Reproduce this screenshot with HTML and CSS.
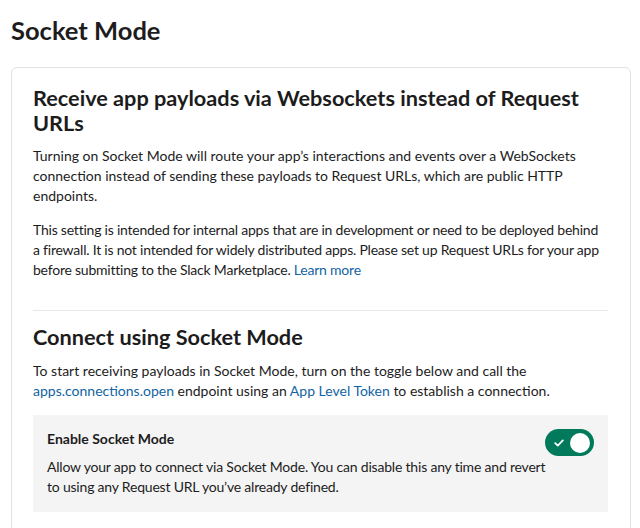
FILE: index.html
```html
<!DOCTYPE html>
<html lang="en">
<head>
<meta charset="utf-8">
<title>Socket Mode</title>
<link rel="stylesheet" href="styles.css">
</head>
<body>
<main class="page">
  <h1 class="page-title">Socket Mode</h1>
  <section class="card">
    <h2 class="section-title">Receive app payloads via Websockets instead of Request URLs</h2>
    <p class="text">Turning on Socket Mode will route your app’s interactions and events over a WebSockets connection instead of sending these payloads to Request URLs, which are public HTTP endpoints.</p>
    <p class="text text-tight">This setting is intended for internal apps that are in development or need to be deployed behind a firewall. It is not intended for widely distributed apps. Please set up Request URLs for your app before submitting to the Slack Marketplace. <a class="link" href="#">Learn more</a></p>
    <hr class="divider">
    <h2 class="section-title second">Connect using Socket Mode</h2>
    <p class="text">To start receiving payloads in Socket Mode, turn on the toggle below and call the <a class="link" href="#">apps.connections.open</a> endpoint using an <a class="link" href="#">App Level Token</a> to establish a connection.</p>
    <div class="setting">
      <div class="setting-title">Enable Socket Mode</div>
      <div class="toggle" role="switch" aria-checked="true">
        <svg class="check" width="10" height="8" viewBox="0 0 10 8"><path d="M1.2 4.2 L3.8 6.6 L8.8 1.4" fill="none" stroke="#fff" stroke-width="1.8" stroke-linecap="round" stroke-linejoin="round"/></svg>
        <span class="knob"></span>
      </div>
      <div class="setting-desc">Allow your app to connect via Socket Mode. You can disable this any time and revert to using any Request URL you’ve already defined.</div>
    </div>
  </section>
</main>
</body>
</html>
```
FILE: styles.css
```css
* { box-sizing: border-box; }
html, body { margin: 0; padding: 0; background: #fff; }
body {
  font-family: Lato, "Open Sans", sans-serif;
  color: #1d1c1d;
  overflow: hidden;
}
.page {
  padding: 15px 9px 0 11px;
}
.page-title {
  margin: 0 0 22px 0;
  font-size: 25.5px;
  line-height: 30px;
  font-weight: 700;
}
.card {
  border: 1px solid #e2e2e2;
  border-radius: 6px;
  padding: 18px 22px 40px 21px;
}
.section-title {
  margin: 0 0 10px 0;
  font-size: 21.7px;
  line-height: 25px;
  font-weight: 700;
}
.section-title.second { margin-bottom: 11px; }
.text {
  margin: 0 0 14px 0;
  font-size: 14px;
  line-height: 20px;
}
.text-tight { letter-spacing: -0.22px; }
.link { color: #1264a3; text-decoration: none; }
.divider {
  border: 0;
  border-top: 1px solid #e8e8e8;
  margin: 30px 0 14px 0;
}
.setting {
  margin-top: 14px;
  background: #f4f4f4;
  padding: 14px 14px 15px 14px;
  display: grid;
  grid-template-columns: 1fr auto;
  column-gap: 16px;
}
.setting-title {
  grid-column: 1;
  grid-row: 1;
  font-size: 14px;
  line-height: 20px;
  font-weight: 700;
  margin-top: 0;
}
.setting-desc {
  grid-column: 1 / span 2;
  grid-row: 2;
  max-width: 508px;
  font-size: 14px;
  line-height: 20px;
  letter-spacing: -0.2px;
  margin-top: 1px;
}
.toggle {
  grid-column: 2;
  grid-row: 1;
  align-self: start;
  width: 49px;
  height: 27px;
  border-radius: 14px;
  background: #007a5a;
  display: flex;
  align-items: center;
  justify-content: space-between;
  padding: 0 4px 0 9px;
}
.check { display: block; }
.knob {
  width: 20px;
  height: 20px;
  border-radius: 50%;
  background: #fff;
}
```
